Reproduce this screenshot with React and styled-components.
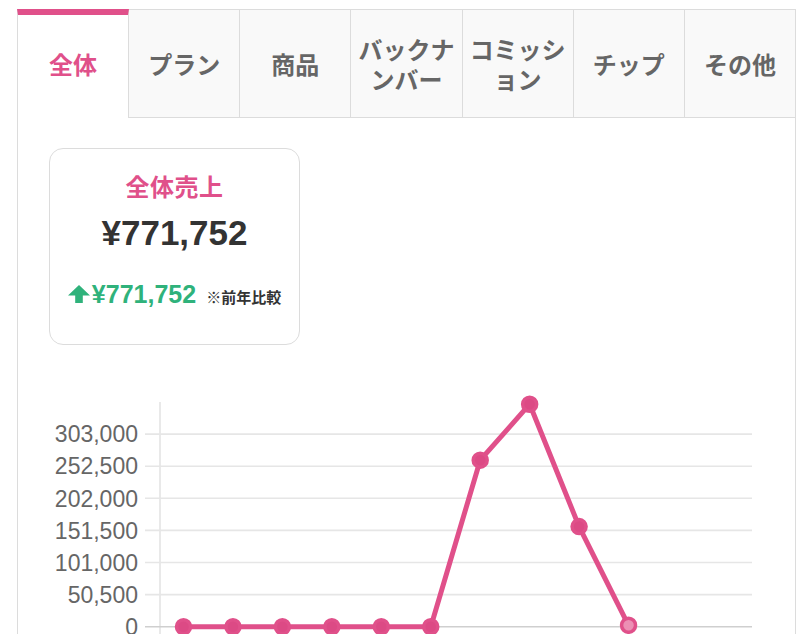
import React from "react";
import styled, { createGlobalStyle } from "styled-components";

const PINK = "#e0508a";
const GREEN = "#2fb27b";
const BORDER = "#dcdcdc";

const Global = createGlobalStyle`
  html, body { margin: 0; padding: 0; background: #fff; overflow: hidden; }
  * { box-sizing: border-box; }
  body { font-family: "Liberation Sans", "Noto Sans CJK JP", sans-serif; }
`;

const Page = styled.div`
  width: 800px;
  height: 634px;
  padding: 9px 0 0 17px;
  overflow: hidden;
`;

const Frame = styled.div`
  width: 779px;
  display: flex;
  flex-direction: column;
`;

const TabBar = styled.div`
  display: flex;
  height: 109px;
`;

const Tab = styled.div`
  flex: 1 1 0;
  display: flex;
  flex-direction: column;
  align-items: center;
  justify-content: center;
  text-align: center;
  font-family: "Noto Sans CJK JP", sans-serif;
  font-weight: 700;
  font-size: 24px;
  color: ${(p) => (p.$active ? PINK : "#666")};
  background: ${(p) => (p.$active ? "#fff" : "#f9f9f9")};
  border-right: 1px solid ${BORDER};
  border-top: ${(p) => (p.$active ? `6px solid ${PINK}` : `1px solid ${BORDER}`)};
  border-bottom: ${(p) => (p.$active ? "none" : `1px solid ${BORDER}`)};
  border-left: ${(p) => (p.$first ? `1px solid ${BORDER}` : "none")};
  padding-bottom: ${(p) => (p.$active ? "5px" : "0")};
  white-space: nowrap;
`;

const TabLine = styled.span`
  display: block;
  height: 30px;
  line-height: 30px;
`;

const Panel = styled.div`
  border-left: 1px solid ${BORDER};
  border-right: 1px solid ${BORDER};
  height: 520px;
  padding: 30px 0 0 31px;
  background: #fff;
`;

const Card = styled.div`
  width: 251px;
  height: 197px;
  border: 1px solid ${BORDER};
  border-radius: 14px;
  display: flex;
  flex-direction: column;
  align-items: center;
  padding-top: 22px;
  background: #fff;
`;

const CardTitle = styled.div`
  font-family: "Noto Sans CJK JP", sans-serif;
  font-weight: 700;
  font-size: 24px;
  line-height: 30px;
  letter-spacing: 0.5px;
  color: ${PINK};
`;

const Amount = styled.div`
  margin-top: 12px;
  font-family: "Liberation Sans", "Noto Sans CJK JP", sans-serif;
  font-weight: 700;
  font-size: 35px;
  line-height: 40px;
  color: #333;
`;

const DiffRow = styled.div`
  margin-top: 26px;
  display: flex;
  align-items: baseline;
  line-height: 30px;
`;

const DiffValue = styled.span`
  display: inline-flex;
  align-items: baseline;
  font-family: "Liberation Sans", sans-serif;
  font-weight: 700;
  font-size: 25px;
  color: ${GREEN};
  svg { margin-right: 2px; align-self: center; }
`;

const Note = styled.span`
  margin-left: 10px;
  font-family: "Noto Sans CJK JP", sans-serif;
  font-weight: 700;
  font-size: 15px;
  color: #333;
`;

const ChartSvg = styled.svg`
  display: block;
  margin-top: 45px;
  margin-left: -31px;
  overflow: hidden;
`;

const tabs = [
  { label: ["全体"], active: true },
  { label: ["プラン"] },
  { label: ["商品"] },
  { label: ["バックナ", "ンバー"] },
  { label: ["コミッシ", "ョン"] },
  { label: ["チップ"] },
  { label: ["その他"] },
];

const ZERO = 626.7;
const STEP = 32.1;
const ticks = ["0", "50,500", "101,000", "151,500", "202,000", "252,500", "303,000"];
const values = [0, 0, 0, 0, 0, 0, 262000, 350000, 157500, 2252];
const yOf = (v) => ZERO - v * ((STEP * 6) / 303000);
const xOf = (i) => 183.5 + 49.45 * i;

function Chart() {
  const pts = values.map((v, i) => [xOf(i), yOf(v)]);
  const d = pts.map((p, i) => `${i ? "L" : "M"}${p[0].toFixed(1)} ${p[1].toFixed(1)}`).join(" ");
  return (
    <ChartSvg width="777" height="250" viewBox="18 390 777 250">
      <line x1="160" y1="402" x2="160" y2="640" stroke="#e2e2e2" strokeWidth="1.5" />
      {ticks.map((t, i) => {
        const y = ZERO - STEP * i;
        return (
          <g key={t}>
            <line
              x1="145"
              x2="752"
              y1={y}
              y2={y}
              stroke={i === 0 ? "#cfcfcf" : "#e6e6e6"}
              strokeWidth="1.6"
            />
            <text
              x="138"
              y={y}
              dy="0.36em"
              textAnchor="end"
              fontFamily="Liberation Sans, sans-serif"
              fontSize="23"
              fill="#666"
            >
              {t}
            </text>
          </g>
        );
      })}
      <path d={d} fill="none" stroke={PINK} strokeWidth="5" strokeLinejoin="round" />
      {pts.map((p, i) => (
        <circle
          key={i}
          cx={p[0]}
          cy={p[1]}
          r="7"
          fill={i === pts.length - 1 ? "#ec8fb4" : "#dc4a85"}
          stroke={PINK}
          strokeWidth="3.5"
        />
      ))}
    </ChartSvg>
  );
}

function UpArrow() {
  return (
    <svg width="22" height="18" viewBox="0 0 22 18">
      <path d="M11 0 L22 10.5 L14.8 10.5 L14.8 18 L7.2 18 L7.2 10.5 L0 10.5 Z" fill={GREEN} />
    </svg>
  );
}

export default function App() {
  return (
    <>
      <Global />
      <Page>
        <Frame>
          <TabBar>
            {tabs.map((t, i) => (
              <Tab key={i} $active={t.active} $first={i === 0}>
                {t.label.map((l, j) => (
                  <TabLine key={j}>{l}</TabLine>
                ))}
              </Tab>
            ))}
          </TabBar>
          <Panel>
            <Card>
              <CardTitle>全体売上</CardTitle>
              <Amount>¥771,752</Amount>
              <DiffRow>
                <DiffValue>
                  <UpArrow />
                  ¥771,752
                </DiffValue>
                <Note>※前年比較</Note>
              </DiffRow>
            </Card>
            <Chart />
          </Panel>
        </Frame>
      </Page>
    </>
  );
}
